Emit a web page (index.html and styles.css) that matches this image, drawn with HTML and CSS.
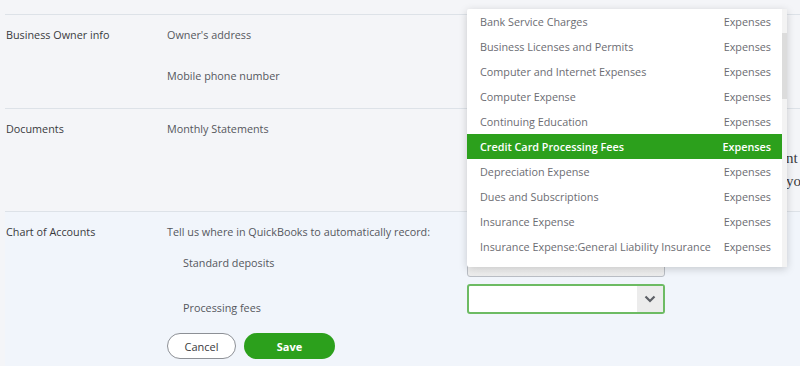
FILE: index.html
```html
<!DOCTYPE html>
<html lang="en">
<head>
    <meta charset="UTF-8">
    <meta name="viewport" content="width=device-width, initial-scale=1.0">
    <title>Payments settings</title>
    <link rel="stylesheet" href="styles.css">
</head>
<body>
    <div class="page">
        <div class="section">
            <div class="section-label">Business Owner info</div>
            <div class="section-body">
                <div class="field">Owner's address</div>
                <div class="field">Mobile phone number</div>
            </div>
        </div>

        <div class="section docs">
            <div class="section-label">Documents</div>
            <div class="section-body">
                <div class="field">Monthly Statements</div>
            </div>
            <div class="hidden-note">nt<br>yo</div>
        </div>

        <div class="section accounts">
            <div class="section-label">Chart of Accounts</div>
            <div class="section-body">
                <div class="field">Tell us where in QuickBooks to automatically record:</div>
                <div class="account-grid">
                    <div class="account-label first">Standard deposits</div>
                    <div class="select plain"></div>
                    <div class="account-label second">Processing fees</div>
                    <div class="select active">
                        <span class="select-arrow">
                            <svg width="12" height="8" viewBox="0 0 12 8"><path d="M1.5 1.5 L6 6 L10.5 1.5" fill="none" stroke="#5d6066" stroke-width="2.2"/></svg>
                        </span>
                    </div>
                </div>
                <div class="actions">
                    <button class="btn cancel">Cancel</button>
                    <button class="btn save">Save</button>
                </div>
            </div>
        </div>
    </div>

    <!-- menu de contas aberto sobre o formulario -->
    <div class="menu">
        <ul class="menu-list" id="menu-list"></ul>
        <div class="menu-scroll"><div class="menu-thumb"></div></div>
    </div>

    <script>
        const contas = [
            "Bank Service Charges",
            "Business Licenses and Permits",
            "Computer and Internet Expenses",
            "Computer Expense",
            "Continuing Education",
            "Credit Card Processing Fees",
            "Depreciation Expense",
            "Dues and Subscriptions",
            "Insurance Expense",
            "Insurance Expense:General Liability Insurance"
        ];
        const lista = document.getElementById("menu-list");
        contas.forEach((nome) => {
            const li = document.createElement("li");
            li.className = "menu-item";
            if (nome === "Credit Card Processing Fees") li.classList.add("selected");
            li.innerHTML = `<span>${nome}</span><span>Expenses</span>`;
            lista.appendChild(li);
        });
    </script>
</body>
</html>
```

FILE: styles.css
```css
body {
    margin: 0;
    font-family: "Open Sans", "Noto Sans", sans-serif;
    font-size: 10.8px;
    color: #393a3d;
    background-color: #f4f5f8;
}

.page {
    padding-top: 14px;
    padding-left: 5px;
}

.section {
    display: grid;
    grid-template-columns: 161px 1fr;
    border-top: 1px solid #dde2e8;
    padding: 12px 0 0 1px;
    position: relative;
}

.section-label {
    line-height: 16px;
}

.field {
    line-height: 16px;
    color: #55575d;
    margin-bottom: 25px;
}

.section:first-child {
    height: 81px;
}

.docs {
    height: 90px;
}

.hidden-note {
    position: absolute;
    left: 781px;
    top: 38px;
    font-family: "Liberation Serif", serif;
    font-size: 15px;
    line-height: 23px;
    color: #393a3d;
}

.accounts {
    background-color: #f1f5fb;
    height: 142px;
}

.accounts .field {
    margin-bottom: 0;
}

.account-grid {
    display: grid;
    grid-template-columns: 300px 198px;
    grid-template-rows: 36px 36px;
    margin-top: 8px;
}

.account-label {
    padding-left: 16px;
    color: #55575d;
    line-height: 16px;
}

.account-label.first {
    padding-top: 7px;
}

.account-label.second {
    padding-top: 16px;
}

.select {
    box-sizing: border-box;
    height: 29px;
    border-radius: 3px;
    background: #fff;
}

.select.plain {
    border: 1px solid #babec5;
    background: linear-gradient(#fff, #ececec);
}

.select.active {
    border: 2px solid #6dbb63;
    display: flex;
    justify-content: flex-end;
    height: 30px;
}

.select-arrow {
    width: 26px;
    background-color: #ececec;
    display: flex;
    align-items: center;
    justify-content: center;
}

.actions {
    display: flex;
    gap: 8px;
    margin-top: 13px;
}

.btn {
    height: 26px;
    border-radius: 13px;
    font-family: inherit;
    font-size: 11px;
    cursor: pointer;
}

.btn.cancel {
    width: 69px;
    border: 1px solid #8d9096;
    background-color: #fff;
    color: #393a3d;
}

.btn.save {
    width: 91px;
    border: none;
    background-color: #2ca01c;
    color: #fff;
    font-weight: 700;
}

.menu {
    position: absolute;
    left: 467px;
    top: 9px;
    width: 320px;
    height: 258px;
    background-color: #fff;
    border-radius: 2px;
    box-shadow: 0 2px 8px rgba(0, 0, 0, 0.18);
    display: flex;
}

.menu-list {
    list-style: none;
    margin: 0;
    padding: 0;
    flex: 1;
}

.menu-item {
    display: flex;
    justify-content: space-between;
    height: 25px;
    line-height: 25px;
    padding: 0 11px 0 13px;
    color: #6b6c72;
}

.menu-item.selected {
    background-color: #2ca01c;
    color: #fff;
    font-weight: 600;
}

.menu-scroll {
    width: 5px;
    background-color: #f3f3f3;
    padding-top: 24px;
}

.menu-thumb {
    height: 66px;
    background-color: #dcdcdc;
}
```
